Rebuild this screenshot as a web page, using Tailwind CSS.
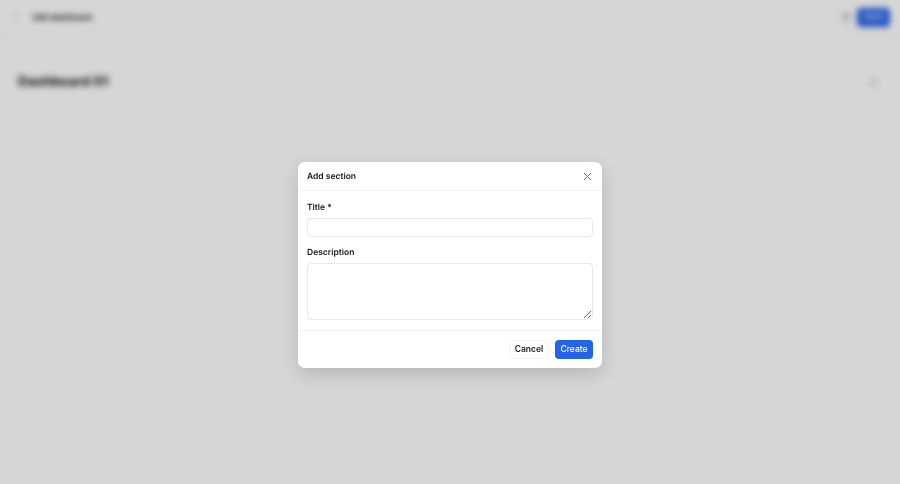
<!DOCTYPE html>
<html lang="en">
<head>
    <meta charset="UTF-8">
    <meta name="viewport" content="width=device-width, initial-scale=1.0">
    <title>Add section</title>
    <script src="https://cdn.jsdelivr.net/npm/@tailwindcss/browser@4"></script>
</head>
<body class="relative h-[484px] w-[900px] overflow-hidden bg-white font-['Inter',sans-serif] text-[#18181b] [text-rendering:geometricPrecision]">
    <!-- page behind the dialog -->
    <header class="flex h-[35px] items-center justify-between border-b border-gray-100 pl-[12px] pr-[10px]">
        <div class="flex items-center gap-[11px]">
            <svg class="h-[10px] w-[10px] text-gray-400" viewBox="0 0 24 24" fill="none" stroke="currentColor" stroke-width="2"><path d="M15 5l-7 7 7 7"/></svg>
            <span class="text-[8px] font-bold">Edit dashboard</span>
        </div>
        <div class="flex items-center gap-[6px]">
            <span class="h-[10px] w-[10px] rounded-full bg-gray-300"></span>
            <span class="flex h-[19px] w-[33px] items-center justify-center rounded-[4px] bg-[#2563eb] text-[8.5px] font-medium text-white">Save</span>
        </div>
    </header>
    <main class="flex items-center justify-between pl-[18px] pr-[22px] pt-[34px]">
        <h1 class="text-[13.5px] font-bold leading-[26px]">Dashboard 01</h1>
        <span class="h-[9px] w-[9px] rounded-full bg-gray-200"></span>
    </main>

    <!-- overlay -->
    <div class="absolute inset-0 flex items-start justify-center bg-black/16 pt-[162px] backdrop-blur-[3px]">
        <div class="w-[304px] rounded-[7px] bg-white shadow-[0_6px_20px_rgba(0,0,0,0.16)]">
            <div class="flex h-[29px] items-center justify-between border-b border-gray-100 pl-[9px] pr-[10px]">
                <h2 class="pt-[1px] text-[8.5px] font-semibold leading-[14px]">Add section</h2>
                <svg class="h-[9px] w-[9px] text-gray-500" viewBox="0 0 9 9" fill="none" stroke="currentColor" stroke-width="1"><path d="M1 1l7 7M8 1L1 8"/></svg>
            </div>
            <div class="flex flex-col px-[9px] pb-[10px] pt-[10px]">
                <label class="text-[8.5px] font-semibold leading-[14px]">Title *</label>
                <input type="text" class="mt-[3px] h-[19px] w-full rounded-[4px] border border-[#e7e8ea] bg-white">
                <label class="mt-[10px] text-[8.5px] font-semibold leading-[13px]">Description</label>
                <textarea class="mt-[3px] h-[57px] w-full rounded-[4px] border border-[#e7e8ea] bg-white"></textarea>
            </div>
            <div class="flex h-[38px] items-center justify-end gap-[6px] border-t border-gray-100 pr-[9px]">
                <button class="flex h-[19px] w-[40px] items-center justify-center rounded-[4px] border border-gray-100 bg-white text-[8.5px] font-semibold">Cancel</button>
                <button class="flex h-[19px] w-[38px] items-center justify-center rounded-[4px] bg-[#2563eb] text-[8.5px] font-medium text-white">Create</button>
            </div>
        </div>
    </div>
</body>
</html>
